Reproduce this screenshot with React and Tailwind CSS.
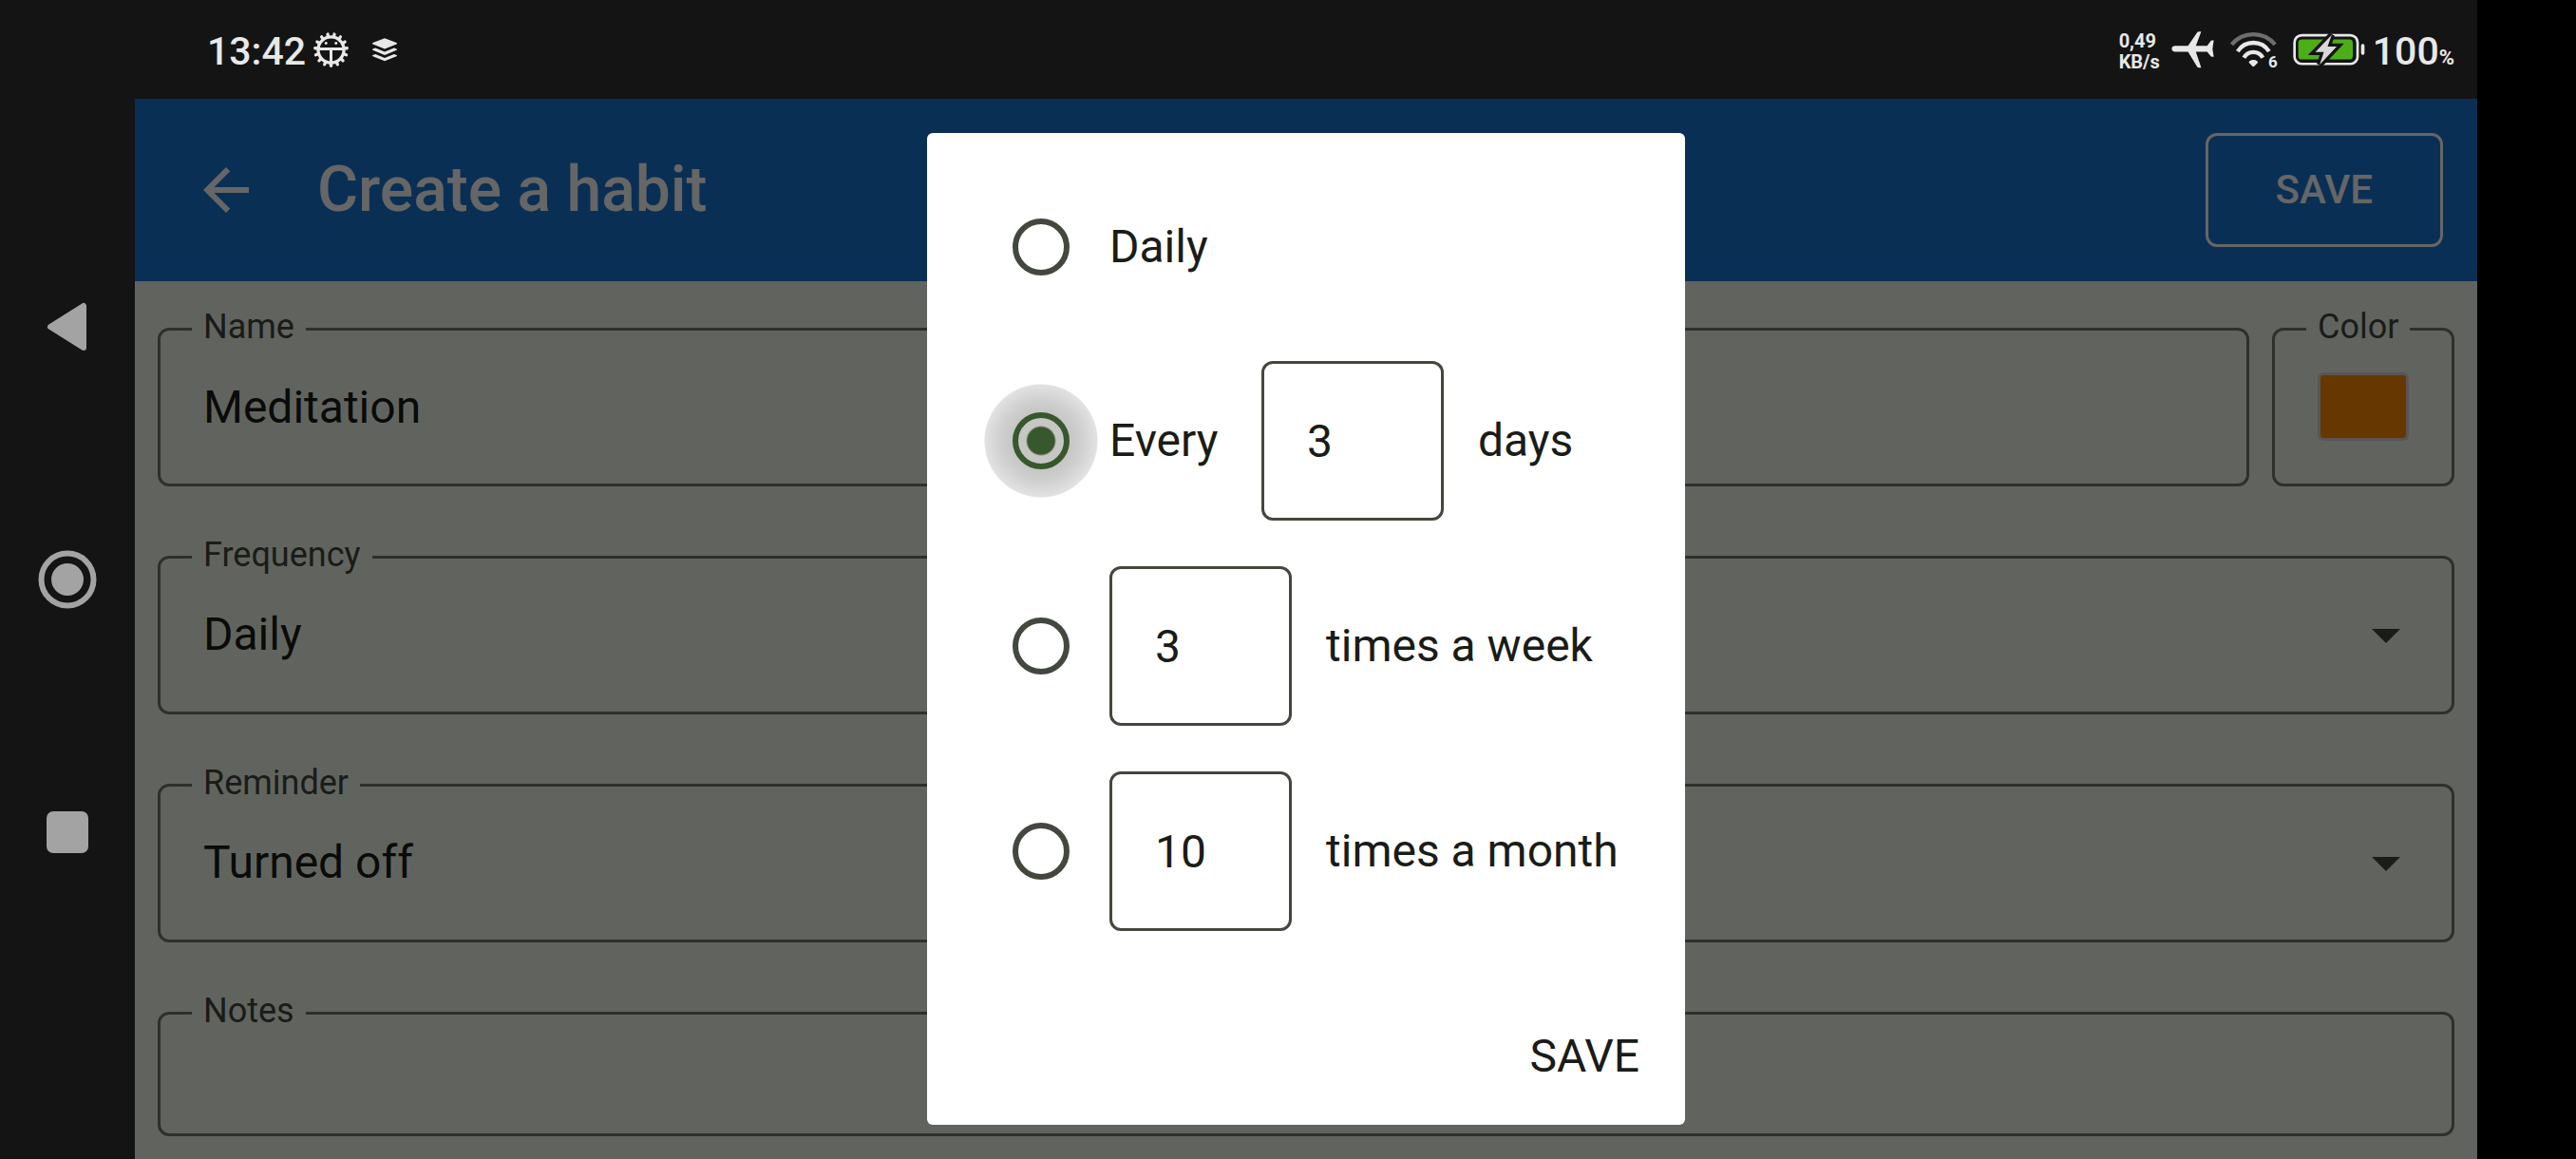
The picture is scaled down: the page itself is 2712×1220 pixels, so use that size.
import React, { useState } from "react";

const TEETH = Array.from({ length: 15 }, (_, i) => {
  const a = ((90 + i * 24) * Math.PI) / 180;
  return { x1: Math.cos(a) * 44, y1: Math.sin(a) * 44, x2: Math.cos(a) * 51, y2: Math.sin(a) * 51 };
});

function GearBugIcon() {
  return (
    <svg viewBox="-56 -56 112 112" className="size-[37px]" aria-hidden="true">
      {TEETH.map((t, i) => (
        <line key={i} {...t} stroke="#e8e8e8" strokeWidth="10" strokeLinecap="round" />
      ))}
      <circle r="41" fill="none" stroke="#e8e8e8" strokeWidth="10" />
      <path d="M-38 -3H38M0 -3V40" stroke="#e8e8e8" strokeWidth="9" />
      <circle cx="-16" cy="-21" r="4.5" fill="#e8e8e8" />
      <circle cx="16" cy="-21" r="4.5" fill="#e8e8e8" />
    </svg>
  );
}

function LayersIcon() {
  return (
    <svg viewBox="0 0 82 74" className="h-[25px] w-[28px]" fill="#e8e8e8" aria-hidden="true">
      <path d="M41 1L78 15Q82 17 78 19L41 34L4 19Q0 17 4 15Z" />
      <path d="M4 34L12 31L41 43L70 31L78 34Q82 36 78 38L41 53L4 38Q0 36 4 34Z" />
      <path d="M4 53L12 50L41 62L70 50L78 53Q82 55 78 57L41 72L4 57Q0 55 4 53Z" />
    </svg>
  );
}

function PlaneIcon() {
  return (
    <svg viewBox="230 66 136 118" className="h-[39px] w-[45px]" fill="#e8e8e8" aria-hidden="true">
      <path d="M240 112H283L312 70Q314 67 318 67H325L308 112H344L355 97Q356 95 359 95H365L361 122L365 147H359Q356 147 355 145L344 131H308L325 182H318Q314 182 312 179L283 131H240Q231 129 231 121.500Q231 114 240 112Z" />
    </svg>
  );
}

function WifiIcon() {
  return (
    <svg viewBox="414 68 153 115" className="h-[38px] w-[51px]" fill="none" strokeWidth="13" aria-hidden="true">
      <path d="M421 110A89 89 0 0 1 559 110" stroke="#6e6e6e" />
      <path d="M440 132A59 59 0 0 1 540 132" stroke="#e8e8e8" />
      <path d="M460 152A34 34 0 0 1 520 152" stroke="#e8e8e8" />
      <path d="M477 163Q490 155 503 163Q506 166 503 169L493 179Q490 181 487 179L477 169Q474 166 477 163Z" fill="#e8e8e8" />
    </svg>
  );
}

function BatteryIcon() {
  const bolt = "M736 78L684 132H711L698 172L752 115H723Z";
  return (
    <svg viewBox="613 70 229 108" className="h-[36px] w-[76px]" aria-hidden="true">
      <rect x="618" y="79" width="200" height="91" rx="23" fill="none" stroke="#e8e8e8" strokeWidth="8" />
      <rect x="630" y="92" width="173" height="64" rx="11" fill="#4caf17" />
      <rect x="829" y="107" width="11" height="34" rx="5" fill="#e8e8e8" />
      <path d={bolt} fill="#141414" stroke="#141414" strokeWidth="20" />
      <path d={bolt} fill="#d8d8d8" />
    </svg>
  );
}

function BackArrow() {
  return (
    <svg viewBox="0 0 24 24" className="size-18" fill="currentColor" aria-hidden="true">
      <path d="M20 11H7.830l5.590-5.590L12 4l-8 8 8 8 1.410-1.410L7.830 13H20v-2z" />
    </svg>
  );
}

function StatusBar() {
  return (
    <header className="flex h-26 shrink-0 items-center justify-between bg-[#141414] pl-19 pr-6 font-medium text-[#e8e8e8]">
      <div className="flex items-center gap-2">
        <time className="pt-1 text-[41px] leading-[48px]">13:42</time>
        <GearBugIcon />
        <span className="pl-4">
          <LayersIcon />
        </span>
      </div>
      <div className="flex items-center">
        <div className="pt-1 text-[20px] leading-[22px] font-bold">
          <p>0,49</p>
          <p>KB/s</p>
        </div>
        <span className="pl-3">
          <PlaneIcon />
        </span>
        <span className="relative pl-4">
          <WifiIcon />
          <span className="absolute -bottom-1 right-0 text-[17px] leading-5 font-bold">6</span>
        </span>
        <span className="pl-4">
          <BatteryIcon />
        </span>
        <p className="pt-1 pl-2 text-[41px] leading-[48px]">
          100<span className="text-[22px] leading-6 font-bold">%</span>
        </p>
      </div>
    </header>
  );
}

function SystemNav() {
  return (
    <nav aria-label="System" className="flex w-[142px] shrink-0 flex-col items-center justify-center gap-[204px] bg-[#141414] text-[#a3a3a3]">
      <button type="button" aria-label="Back">
        <svg viewBox="0 0 62 62" className="size-[62px]" aria-hidden="true">
          <path d="M13 31L48 9V53Z" fill="currentColor" stroke="currentColor" strokeWidth="6" strokeLinejoin="round" />
        </svg>
      </button>
      <button type="button" aria-label="Home">
        <svg viewBox="0 0 62 62" className="size-[62px]" aria-hidden="true">
          <circle cx="31" cy="31" r="27.500" fill="none" stroke="currentColor" strokeWidth="6" />
          <circle cx="31" cy="31" r="17" fill="currentColor" />
        </svg>
      </button>
      <button type="button" aria-label="Recent apps">
        <svg viewBox="0 0 62 62" className="size-[62px]" aria-hidden="true">
          <rect x="9" y="9" width="44" height="44" rx="7" fill="currentColor" />
        </svg>
      </button>
    </nav>
  );
}

function Field({ id, label, className = "", children }) {
  return (
    <fieldset className={`min-w-0 rounded-xl border-3 border-[#74796d] px-[33px] pb-[23px] ${className}`}>
      <legend className="px-3 text-4xl text-[#43483e]">
        <label htmlFor={id} className="block pb-1 leading-11">
          {label}
        </label>
      </legend>
      {children}
    </fieldset>
  );
}

function SelectField({ id, label, options }) {
  return (
    <Field id={id} label={label}>
      <div className="grid items-center">
        <select id={id} className="col-start-1 row-start-1 h-29 w-full appearance-none bg-transparent pl-3 text-5xl leading-18 outline-none">
          {options.map((o) => (
            <option key={o}>{o}</option>
          ))}
        </select>
        <svg viewBox="0 0 24 24" className="pointer-events-none col-start-1 row-start-1 size-18 justify-self-end" fill="#43483e" aria-hidden="true">
          <path d="M7 10l5 5 5-5z" />
        </svg>
      </div>
    </Field>
  );
}

function Radio({ id, value, selected, onSelect }) {
  return (
    <span
      className={`grid size-36 shrink-0 place-items-center ${
        selected ? "bg-[radial-gradient(circle,#c6c6c5_30px,#cfcfcf_42px,#e2e2e2_59px,transparent_60px)]" : ""
      }`}
    >
      <input
        id={id}
        type="radio"
        name="frequency-mode"
        value={value}
        checked={selected}
        onChange={() => onSelect(value)}
        className="size-15 appearance-none rounded-full border-6 border-[#43483e] checked:border-[#37572c] checked:bg-[radial-gradient(circle,#37572c_14px,transparent_16px)]"
      />
    </span>
  );
}

function NumberBox({ label, defaultValue }) {
  return (
    <input
      type="text"
      inputMode="numeric"
      aria-label={label}
      defaultValue={defaultValue}
      className="h-42 w-48 rounded-xl border-3 border-[#43483e] bg-white px-[45px] outline-none"
    />
  );
}

function FrequencyDialog() {
  const [mode, setMode] = useState("every");
  const radio = (value) => <Radio id={`mode-${value}`} value={value} selected={mode === value} onSelect={setMode} />;
  return (
    <div className="absolute inset-0 flex items-center justify-center bg-black/60">
      <form
        role="dialog"
        aria-label="Frequency"
        onSubmit={(e) => e.preventDefault()}
        className="flex min-w-[798px] flex-col gap-12 rounded-md bg-white px-12 pt-12 pb-9 text-5xl leading-18 text-[#1a1c18]"
      >
        <div className="flex items-center">
          {radio("daily")}
          <label htmlFor="mode-daily">Daily</label>
        </div>
        <div className="flex items-center">
          {radio("every")}
          <div className="flex items-center gap-9">
            <label htmlFor="mode-every" className="min-w-31">
              Every
            </label>
            <NumberBox label="Number of days" defaultValue="3" />
            <span>days</span>
          </div>
        </div>
        <div className="flex items-center">
          {radio("week")}
          <div className="flex items-center gap-9">
            <NumberBox label="Times a week" defaultValue="3" />
            <label htmlFor="mode-week">times a week</label>
          </div>
        </div>
        <div className="flex items-center">
          {radio("month")}
          <div className="flex items-center gap-9">
            <NumberBox label="Times a month" defaultValue="10" />
            <label htmlFor="mode-month">times a month</label>
          </div>
        </div>
        <button type="submit" className="mt-12 self-end">
          SAVE
        </button>
      </form>
    </div>
  );
}

export default function App() {
  return (
    <div className="flex min-h-screen bg-black font-['Roboto','Liberation_Sans',sans-serif]">
      <SystemNav />
      <div className="mr-26 flex min-w-0 flex-1 flex-col">
        <StatusBar />
        <div className="relative flex flex-1 flex-col bg-[#f3f9eb] text-[#1a1c18]">
          <div className="flex h-48 shrink-0 items-center bg-[#1976d2] pl-15 pr-9 font-medium text-white">
            <button type="button" aria-label="Go back">
              <BackArrow />
            </button>
            <h1 className="flex-1 pl-15 text-[66px] leading-[84px]">Create a habit</h1>
            <button type="button" className="h-30 rounded-xl border-3 border-white px-[71px] text-[42px] leading-15">
              SAVE
            </button>
          </div>
          <main className="flex flex-col gap-[50px] px-6 pt-[26px]">
            <div className="flex gap-6">
              <Field id="name" label="Name" className="flex-1">
                <input id="name" type="text" defaultValue="Meditation" className="block h-29 w-full bg-transparent px-3 text-5xl outline-none" />
              </Field>
              <Field id="color" label="Color" className="w-48">
                <div className="flex h-29 items-center justify-center">
                  <input
                    id="color"
                    type="color"
                    defaultValue="#ff8c00"
                    className="h-18 w-24 appearance-none rounded-md border-3 border-[#e0d4cc] bg-transparent p-0 [&::-webkit-color-swatch]:rounded-none [&::-webkit-color-swatch]:border-none [&::-webkit-color-swatch-wrapper]:p-0"
                  />
                </div>
              </Field>
            </div>
            <SelectField id="frequency" label="Frequency" options={["Daily", "Every 3 days", "3 times a week", "10 times a month"]} />
            <SelectField id="reminder" label="Reminder" options={["Turned off", "Turned on"]} />
            <Field id="notes" label="Notes">
              <textarea id="notes" className="block h-20 w-full resize-none bg-transparent px-3 text-5xl outline-none" />
            </Field>
          </main>
          <FrequencyDialog />
        </div>
      </div>
    </div>
  );
}
